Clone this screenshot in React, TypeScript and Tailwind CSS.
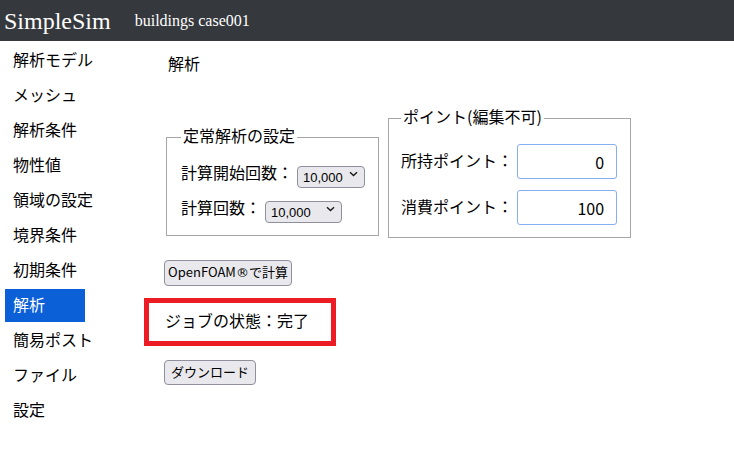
import { ChangeEvent, useState } from 'react';

const menuItems = [
  '解析モデル',
  'メッシュ',
  '解析条件',
  '物性値',
  '領域の設定',
  '境界条件',
  '初期条件',
  '解析',
  '簡易ポスト',
  'ファイル',
  '設定',
];

const Select = ({ width, value, onChange }: { width: string; value: string; onChange: (e: ChangeEvent<HTMLSelectElement>) => void }) => (
  <div className={`relative ml-1 h-[22px] ${width}`}>
    <select
      value={value}
      onChange={onChange}
      className="h-full w-full appearance-none rounded-[4px] border border-[#8f8f9d] bg-[#e9e9ed] pl-[5px] font-['Liberation_Sans',sans-serif] text-[13px] leading-none text-black outline-none"
    >
      <option>1,000</option>
      <option>5,000</option>
      <option>10,000</option>
      <option>20,000</option>
    </select>
    <span className="pointer-events-none absolute right-[7px] top-0 flex h-full items-center">
      <svg width="9" height="6" viewBox="0 0 9 6">
        <path d="M1 1.2 L4.5 4.6 L8 1.2" fill="none" stroke="#1a1a1a" strokeWidth="1.4" />
      </svg>
    </span>
  </div>
);

export default function App() {
  const [startCount, setStartCount] = useState('10,000');
  const [count, setCount] = useState('10,000');

  return (
    <div className="min-h-[469px] bg-white font-['Noto_Sans_CJK_JP','Noto_Sans',sans-serif] text-black">
      <header className="flex h-[41px] items-center bg-[#35383d] pl-[4px] font-['Liberation_Serif',serif] text-white">
        <span className="text-[24px] leading-none">SimpleSim</span>
        <span className="ml-[24px] text-[16px] leading-none">buildings case001</span>
      </header>

      <div className="flex">
        <nav className="w-[144px] shrink-0 pl-[5px] pt-[3px]">
          <ul className="flex flex-col gap-[2px]">
            {menuItems.map((label, index) => (
              <li
                key={index}
                className={`flex h-[33px] w-[80px] items-center whitespace-nowrap px-[8px] pb-[4px] text-[16px] leading-6 ${
                  index === 7 ? 'bg-[#0b5fd7] text-white' : ''
                }`}
              >
                {label}
              </li>
            ))}
          </ul>
        </nav>

        <main className="flex-1 pt-[10px]">
          <h2 className="pl-[24px] text-[16px] font-normal leading-6">解析</h2>

          <div className="mt-[31px] flex items-start gap-[9px] pl-[22px]">
            <fieldset className="mt-[19px] w-[213px] border border-[#a6a6a6] pb-[9px] pl-[14px] pt-[7px]">
              <legend className="px-[2px] pb-[4px] text-[16px] leading-[20px]">定常解析の設定</legend>
              <div className="flex h-[35px] items-center text-[16px]">
                <span className="pb-[4px]">計算開始回数：</span>
                <Select width="w-[68px]" value={startCount} onChange={(e) => setStartCount(e.target.value)} />
              </div>
              <div className="flex h-[35px] items-center text-[16px]">
                <span className="pb-[4px]">計算回数：</span>
                <Select width="w-[77px]" value={count} onChange={(e) => setCount(e.target.value)} />
              </div>
            </fieldset>

            <fieldset className="w-[243px] border border-[#a6a6a6] pb-[12px] pl-[12px] pt-[14px]">
              <legend className="px-[2px] pb-[4px] text-[16px] leading-[20px]">ポイント(編集不可)</legend>
              <div className="flex flex-col gap-[11px]">
                <div className="flex items-center text-[16px]">
                  <span className="pb-[4px]">所持ポイント：</span>
                  <input
                    readOnly
                    value="0"
                    className="ml-[4px] h-[35px] w-[100px] rounded-[3px] border border-[#86aef0] pr-[12px] text-right text-[16px] outline-none"
                  />
                </div>
                <div className="flex items-center text-[16px]">
                  <span className="pb-[4px]">消費ポイント：</span>
                  <input
                    readOnly
                    value="100"
                    className="ml-[4px] h-[35px] w-[100px] rounded-[3px] border border-[#86aef0] pr-[12px] text-right text-[16px] outline-none"
                  />
                </div>
              </div>
            </fieldset>
          </div>

          <div className="mt-[20px] pl-[20px]">
            <button className="h-[26px] w-[128px] rounded-[4px] border border-[#8f8f9d] bg-[#e9e9ed] pb-[2px] text-[13px] leading-none">
              OpenFOAM<span className="font-['DejaVu_Sans',sans-serif]">®</span>で計算
            </button>
          </div>

          <div className="mt-[12px] flex h-[48px] w-[192px] items-center border-[5px] border-[#ec1c24] pb-[4px] pl-[16px] text-[16px]">
            ジョブの状態：完了
          </div>

          <div className="mt-[12px] pl-[20px]">
            <button className="h-[25px] w-[92px] rounded-[4px] border border-[#8f8f9d] bg-[#e9e9ed] pb-[2px] text-[13px] leading-none">
              ダウンロード
            </button>
          </div>
        </main>
      </div>
    </div>
  );
}
